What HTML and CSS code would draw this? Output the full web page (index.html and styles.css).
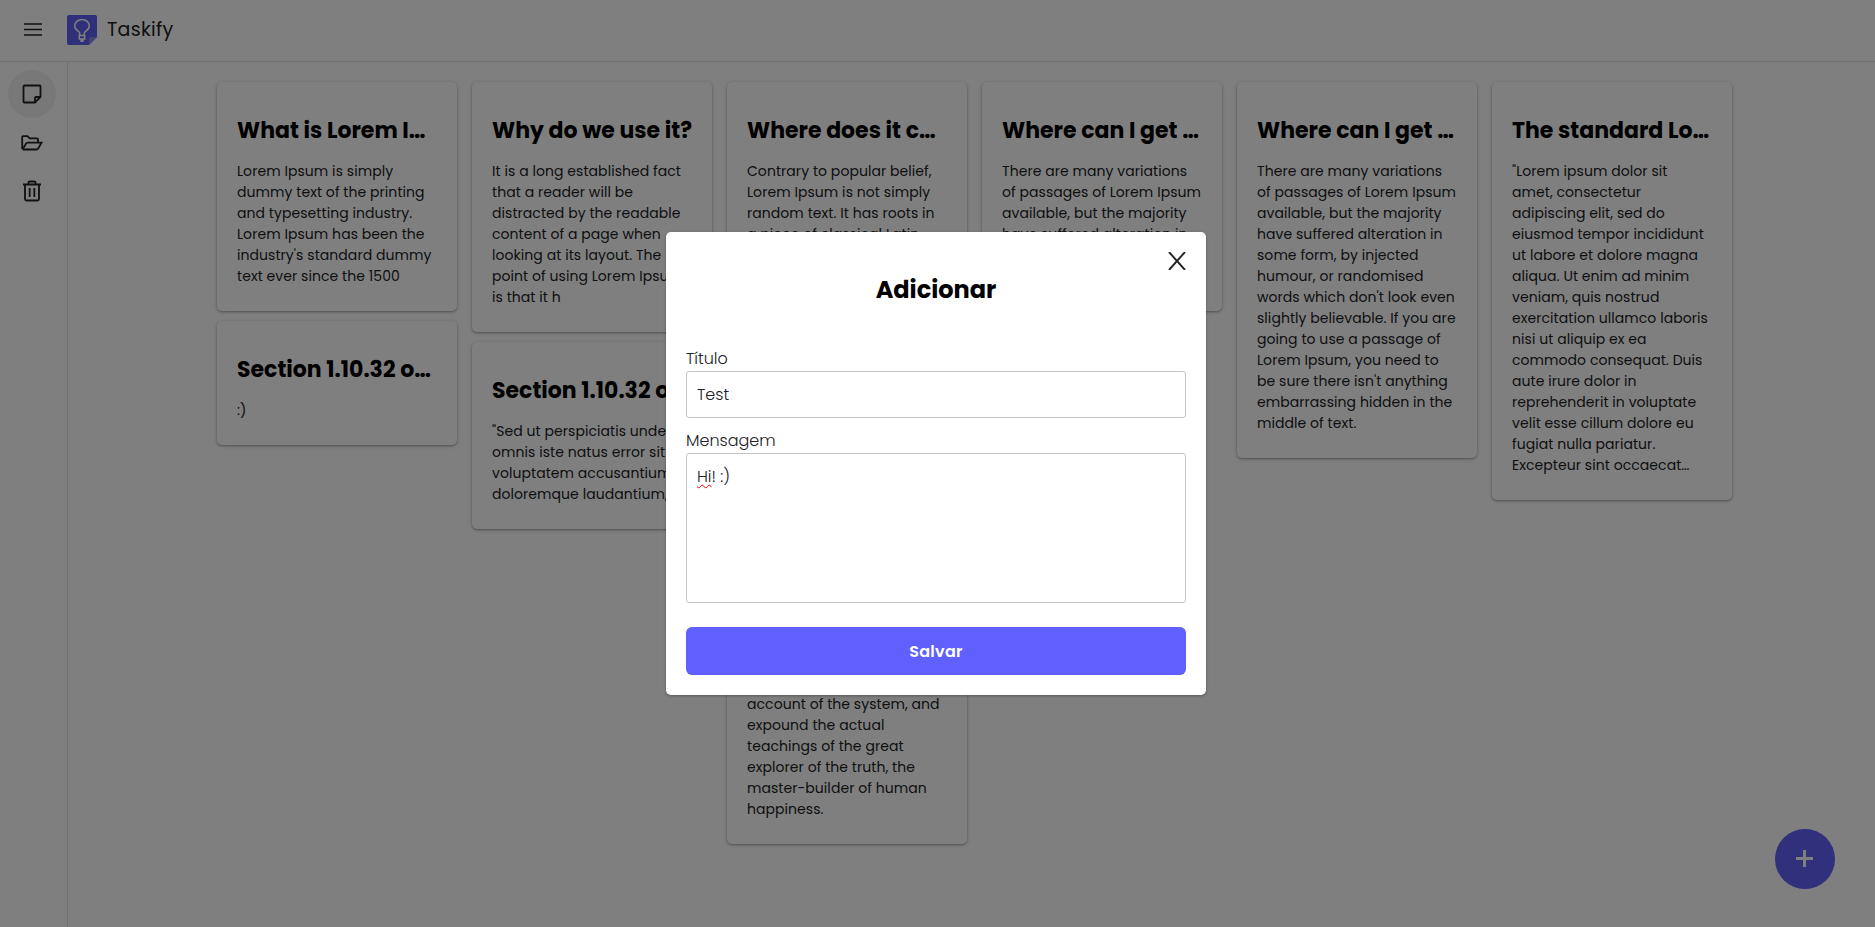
FILE: index.html
```html
<!DOCTYPE html>
<html lang="pt-BR">
<head>
<meta charset="utf-8">
<title>Taskify</title>
<link rel="stylesheet" href="styles.css">
</head>
<body>
<div class="app">
  <header class="header">
    <svg class="menu-icon" viewBox="0 0 18 13" width="18" height="13"><path d="M0 1h18M0 6.500h18M0 12h18" stroke="#202124" stroke-width="1.600"/></svg>
    <svg class="logo" viewBox="0 0 30 30" width="30" height="30"><path d="M2 0h26a2 2 0 0 1 2 2v20l-8 8H2a2 2 0 0 1-2-2V2a2 2 0 0 1 2-2z" fill="#6060f4"/><path d="M22 30v-6a2 2 0 0 1 2-2h6z" fill="#9088e0"/><path d="M12.700 20.500v-2.500c0-1.700-5-2.600-5-7.100a7.300 6.400 0 0 1 14.600 0c0 4.500-5 5.400-5 7.100v2.500M12.300 20.500h5.400v3.500h-5.400zM14 24.500v1.700h2v-1.700" fill="none" stroke="#fff" stroke-width="1.500"/></svg>
    <span class="brand">Taskify</span>
  </header>
  <div class="body">
    <nav class="sidebar">
      <a class="nav-item active"><svg viewBox="0 0 20 20" width="20" height="20"><path d="M2.500 1.500h15a1 1 0 0 1 1 1v10.500l-5.500 5.500H2.500a1 1 0 0 1-1-1v-15a1 1 0 0 1 1-1zM13 18v-4a1 1 0 0 1 1-1h4"/></svg></a>
      <a class="nav-item"><svg viewBox="0 0 22 16" width="22" height="16"><path d="M1.200 14V2a.8.8 0 0 1 .8-.8h4.500l2.200 2.200h7.300a1 1 0 0 1 1 1V7.600M1.500 14.500L5 8.600a2 2 0 0 1 1.600-1h14l-3.600 6.200a1.500 1.500 0 0 1-1.200.7H1.500"/></svg></a>
      <a class="nav-item"><svg viewBox="0 0 20 22" width="20" height="22"><path d="M1 4.500h18M6.500 4V2.500a1 1 0 0 1 1-1h5a1 1 0 0 1 1 1V4M3 5v14a1.500 1.500 0 0 0 1.500 1.500h11A1.500 1.500 0 0 0 17 19V5M7.700 8v9M12.300 8v9"/></svg></a>
    </nav>
    <main class="board">
      <div class="column">
        <article class="card"><h2>What is Lorem I…</h2><p>Lorem Ipsum is simply<br>dummy text of the printing<br>and typesetting industry.<br>Lorem Ipsum has been the<br>industry's standard dummy<br>text ever since the 1500</p></article>
        <article class="card"><h2>Section 1.10.32 o…</h2><p>:)</p></article>
      </div>
      <div class="column">
        <article class="card"><h2>Why do we use it?</h2><p>It is a long established fact<br>that a reader will be<br>distracted by the readable<br>content of a page when<br>looking at its layout. The<br>point of using Lorem Ipsum<br>is that it h</p></article>
        <article class="card"><h2>Section 1.10.32 o…</h2><p>"Sed ut perspiciatis unde<br>omnis iste natus error sit<br>voluptatem accusantium<br>doloremque laudantium,</p></article>
      </div>
      <div class="column">
        <article class="card"><h2>Where does it c…</h2><p>Contrary to popular belief,<br>Lorem Ipsum is not simply<br>random text. It has roots in<br>a piece of classical Latin<br>literature from 45 BC,<br>making it over 2000 years<br>old. Richard McClintock, a<br>Latin professor at<br>Hampden-Sydney College<br>in Virginia, looked up one<br>of the more obscure Latin<br>words, consectetur, from a<br>Lorem Ipsum passage, and<br>going through the cites of<br>the word in classical…</p></article>
        <article class="card"><h2>Section 1.10.33 o…</h2><p>But I must explain to you<br>how all this mistaken idea<br>of denouncing pleasure and<br>praising pain was born and<br>I will give you a complete<br>account of the system, and<br>expound the actual<br>teachings of the great<br>explorer of the truth, the<br>master-builder of human<br>happiness.</p></article>
      </div>
      <div class="column">
        <article class="card"><h2>Where can I get …</h2><p>There are many variations<br>of passages of Lorem Ipsum<br>available, but the majority<br>have suffered alteration in<br>some form, by injected<br>humour</p></article>
      </div>
      <div class="column">
        <article class="card"><h2>Where can I get …</h2><p>There are many variations<br>of passages of Lorem Ipsum<br>available, but the majority<br>have suffered alteration in<br>some form, by injected<br>humour, or randomised<br>words which don't look even<br>slightly believable. If you are<br>going to use a passage of<br>Lorem Ipsum, you need to<br>be sure there isn't anything<br>embarrassing hidden in the<br>middle of text.</p></article>
      </div>
      <div class="column">
        <article class="card"><h2>The standard Lo…</h2><p>"Lorem ipsum dolor sit<br>amet, consectetur<br>adipiscing elit, sed do<br>eiusmod tempor incididunt<br>ut labore et dolore magna<br>aliqua. Ut enim ad minim<br>veniam, quis nostrud<br>exercitation ullamco laboris<br>nisi ut aliquip ex ea<br>commodo consequat. Duis<br>aute irure dolor in<br>reprehenderit in voluptate<br>velit esse cillum dolore eu<br>fugiat nulla pariatur.<br>Excepteur sint occaecat…</p></article>
      </div>
    </main>
  </div>
  <button class="fab" aria-label="Adicionar"><svg viewBox="0 0 17 17" width="17" height="17"><path d="M0 8.500h17M8.500 0v17" stroke="#fff" stroke-width="3"/></svg></button>
</div>
<div class="overlay">
  <form class="modal">
    <svg class="close" viewBox="0 0 18 18" width="18" height="18"><path d="M1 0L17 18M17 0L1 18" stroke="#202124" stroke-width="1.900"/></svg>
    <h1>Adicionar</h1>
    <label>Título</label>
    <div class="field">Test</div>
    <label>Mensagem</label>
    <div class="field area"><span class="misspelt">Hi</span>! :)</div>
    <button class="save" type="button">Salvar</button>
  </form>
</div>
</body>
</html>
```
FILE: styles.css
```css
* { box-sizing: border-box; }
body { margin: 0; font-family: Poppins, Inter, sans-serif; color: #202124; background: #fff; overflow: hidden; }
h1, h2, p { margin: 0; }
button { border: 0; padding: 0; font: inherit; }
.app { height: 100vh; display: flex; flex-direction: column; }
.header { height: 62px; border-bottom: 1px solid #e4e4e6; display: flex; align-items: center; padding: 0 24px 2px 23.5px; flex: none; }
.logo { margin-left: 25.5px; }
.brand { margin-left: 10px; font-size: 19px; letter-spacing: .3px; }
.body { flex: 1; min-height: 0; display: flex; }
.sidebar { width: 68px; flex: none; border-right: 1px solid #e0e0e2; padding: 8px 0 0 8px; }
.nav-item { width: 48px; height: 48px; border-radius: 50%; display: flex; align-items: center; justify-content: center; }
.nav-item:not(.active) { padding: 1px 1px 0 0; }
.nav-item.active { background: #f1f1f1; }
.nav-item svg { fill: none; stroke: #202124; stroke-width: 1.8; }
.board { flex: 1; display: flex; justify-content: center; gap: 15px; padding: 20px 0 0 6px; }
.column { width: 240px; display: flex; flex-direction: column; gap: 10px; }
.card { flex: none; padding: 32px 20px 24px; border-radius: 5px; box-shadow: 0 1px 4px rgba(0,0,0,.2), 0 1px 2px rgba(0,0,0,.24); white-space: nowrap; }
.card h2 { font-size: 22px; line-height: 33px; margin-bottom: 14px; font-weight: 700; color: #000; }
.card p { font-size: 14px; line-height: 21px; letter-spacing: .06px; }
.fab { position: absolute; left: 1775px; top: 829px; width: 60px; height: 60px; border-radius: 50%; background: #6060f8; display: flex; align-items: center; justify-content: center; }
.fab svg { margin: 0 1px 1px 0; }
.overlay { position: absolute; inset: 0; background: rgba(0,0,0,.5); display: flex; align-items: center; justify-content: center; padding-right: 3px; }
.modal { position: relative; width: 540px; height: 463px; padding: 40px 20px 20px; background: #fff; border-radius: 5px; box-shadow: 0 1px 3px rgba(0,0,0,.3); display: flex; flex-direction: column; }
.close { position: absolute; right: 20px; top: 20px; }
.modal h1 { text-align: center; font-size: 24px; line-height: 36px; margin-bottom: 38px; color: #000; }
.modal label { font-size: 16px; line-height: 26px; height: 25px; font-weight: 300; }
.field { height: 47px; border: 1px solid #c4c4c4; border-radius: 3px; padding: 11px 10px; margin-bottom: 10px; font-size: 16px; line-height: 24px; font-weight: 300; }
.area { height: 150px; margin-bottom: 24px; }
.misspelt { text-decoration: underline wavy #f00 1px; text-decoration-skip-ink: none; text-underline-offset: 2px; }
.save { height: 48px; border-radius: 6px; background: #6060ff; color: #fff; font-size: 16px; font-weight: 600; letter-spacing: .3px; }
```
